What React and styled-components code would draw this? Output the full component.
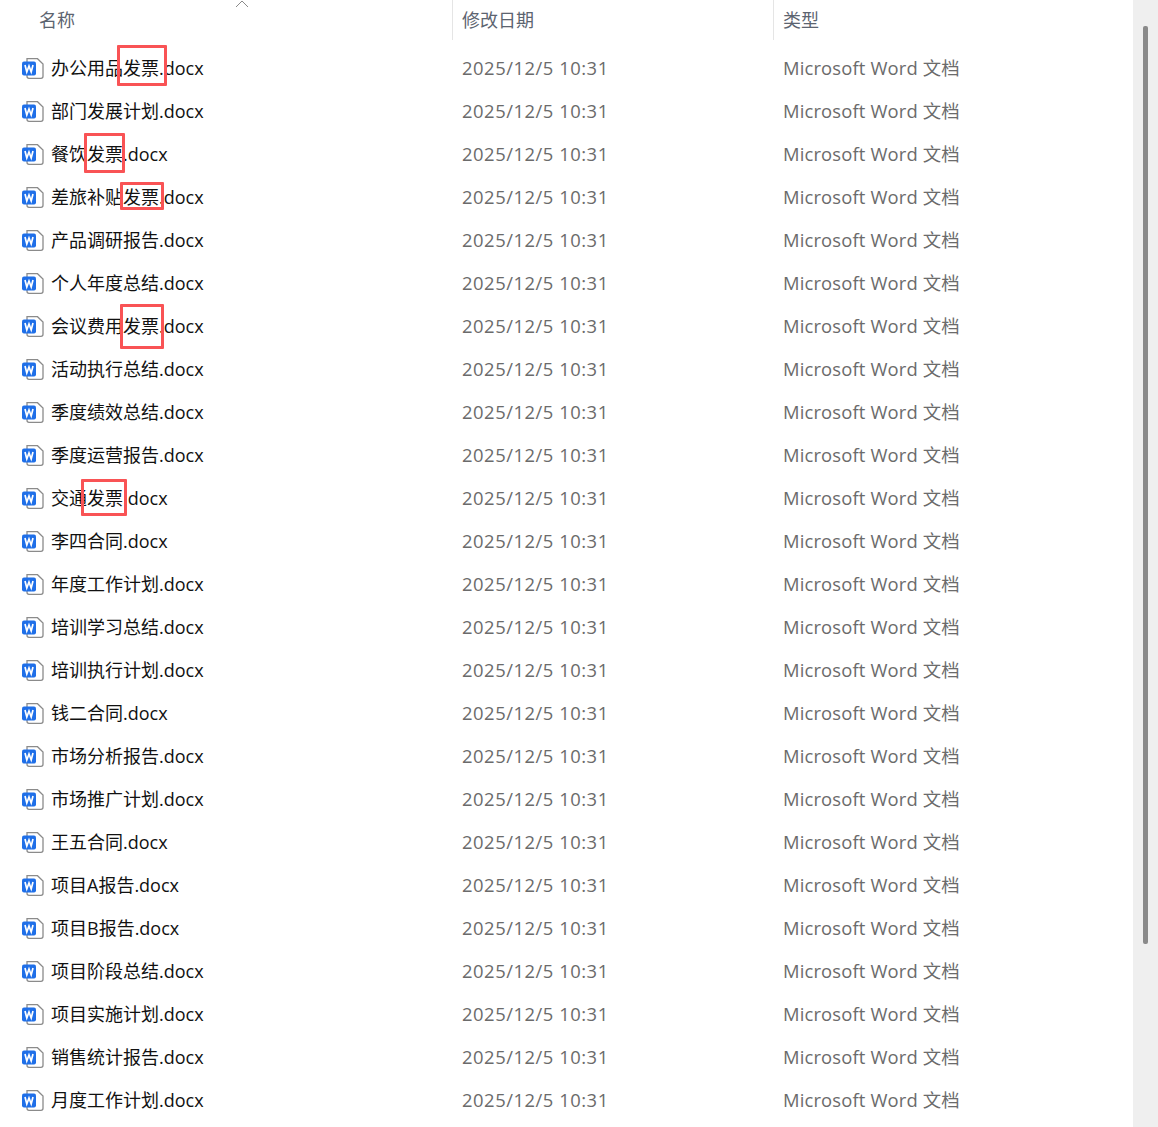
import React from 'react';
import styled, { createGlobalStyle } from 'styled-components';

const GlobalStyle = createGlobalStyle`
  html, body {
    margin: 0;
    padding: 0;
    background: #fff;
  }
`;

const Window = styled.div`
  display: flex;
  width: 1158px;
  height: 1127px;
  overflow: hidden;
  font-family: 'Open Sans', 'Noto Sans CJK SC', sans-serif;
`;

const Explorer = styled.div`
  flex: 1;
  min-width: 0;
`;

const Columns = styled.div`
  display: grid;
  grid-template-columns: 452px 321px 1fr;
`;

const Header = styled(Columns)`
  height: 40px;
  margin-bottom: 7px;
`;

const HeaderCell = styled.div`
  position: relative;
  display: flex;
  align-items: center;
  height: 40px;
  padding-left: ${({ $first }) => ($first ? '39px' : '9px')};
  padding-bottom: 2px;
  box-sizing: border-box;
  border-left: ${({ $first }) => ($first ? 'none' : '1px solid #e5e5e5')};
  font-size: 18px;
  color: #5c6470;
`;

const SortCaret = styled.svg`
  position: absolute;
  left: 235px;
  top: 0;
`;

const Row = styled(Columns)`
  position: relative;
  height: 43px;
  align-items: center;
  font-size: 18px;
`;

const NameCell = styled.div`
  display: flex;
  align-items: center;
  gap: 7px;
  padding-left: 22px;
  color: #111;
`;

const FileName = styled.span`
  padding-bottom: 4px;
`;

const MetaCell = styled.div`
  padding-left: 10px;
  padding-bottom: ${({ $date }) => ($date ? '2px' : '4px')};
  color: #6b6b6b;
  font-size: 18.4px;
  letter-spacing: ${({ $date }) => ($date ? '0.53px' : '0.15px')};
`;

const Highlight = styled.div`
  position: absolute;
  box-sizing: border-box;
  left: ${({ $x }) => $x}px;
  top: ${({ $y }) => $y}px;
  width: ${({ $w }) => $w}px;
  height: ${({ $h }) => $h}px;
  border: 3px solid #f95355;
  border-radius: 1px;
`;

const Scrollbar = styled.div`
  width: 25px;
  flex: none;
  padding: 26px 10px 0;
  box-sizing: border-box;
  background: #efefef;
`;

const Thumb = styled.div`
  width: 5px;
  height: 918px;
  border-radius: 2px;
  background: #8a8a8a;
`;

const WordIcon = () => (
  <svg width="22" height="21" viewBox="0 0 22 21" style={{ flex: 'none' }}>
    <path
      d="M5 .7h10.5l5.5 5.3v12.3a2 2 0 0 1-2 2H7a2 2 0 0 1-2-2z"
      fill="#fff"
      stroke="#8b8b8b"
      strokeWidth="1.3"
    />
    <rect x="0" y="3.5" width="14" height="14" rx="2" fill="#1f6fe8" />
    <path
      d="M3 7l1.8 7 2.2-6 2.2 6 1.8-7"
      fill="none"
      stroke="#fff"
      strokeWidth="1.7"
    />
  </svg>
);

const files = [
  { name: '办公用品发票.docx', mark: { x: 117, y: -2, w: 50, h: 41 } },
  { name: '部门发展计划.docx' },
  { name: '餐饮发票.docx', mark: { x: 84, y: 0, w: 41, h: 40 } },
  { name: '差旅补贴发票.docx', mark: { x: 120, y: 6, w: 44, h: 28 } },
  { name: '产品调研报告.docx' },
  { name: '个人年度总结.docx' },
  { name: '会议费用发票.docx', mark: { x: 120, y: -1, w: 44, h: 45 } },
  { name: '活动执行总结.docx' },
  { name: '季度绩效总结.docx' },
  { name: '季度运营报告.docx' },
  { name: '交通发票.docx', mark: { x: 81, y: 2, w: 46, h: 37 } },
  { name: '李四合同.docx' },
  { name: '年度工作计划.docx' },
  { name: '培训学习总结.docx' },
  { name: '培训执行计划.docx' },
  { name: '钱二合同.docx' },
  { name: '市场分析报告.docx' },
  { name: '市场推广计划.docx' },
  { name: '王五合同.docx' },
  { name: '项目A报告.docx' },
  { name: '项目B报告.docx' },
  { name: '项目阶段总结.docx' },
  { name: '项目实施计划.docx' },
  { name: '销售统计报告.docx' },
  { name: '月度工作计划.docx' },
];

export default function App() {
  return (
    <Window>
      <GlobalStyle />
      <Explorer>
        <Header>
          <HeaderCell $first>
            名称
            <SortCaret width="14" height="8" viewBox="0 0 14 8">
              <path d="M1 7l6-6 6 6" fill="none" stroke="#8a8a8a" strokeWidth="1" />
            </SortCaret>
          </HeaderCell>
          <HeaderCell>修改日期</HeaderCell>
          <HeaderCell>类型</HeaderCell>
        </Header>
        {files.map(({ name, mark }) => (
          <Row key={name}>
            <NameCell>
              <WordIcon />
              <FileName>{name}</FileName>
            </NameCell>
            <MetaCell $date>2025/12/5 10:31</MetaCell>
            <MetaCell>Microsoft Word 文档</MetaCell>
            {mark && <Highlight $x={mark.x} $y={mark.y} $w={mark.w} $h={mark.h} />}
          </Row>
        ))}
      </Explorer>
      <Scrollbar>
        <Thumb />
      </Scrollbar>
    </Window>
  );
}
